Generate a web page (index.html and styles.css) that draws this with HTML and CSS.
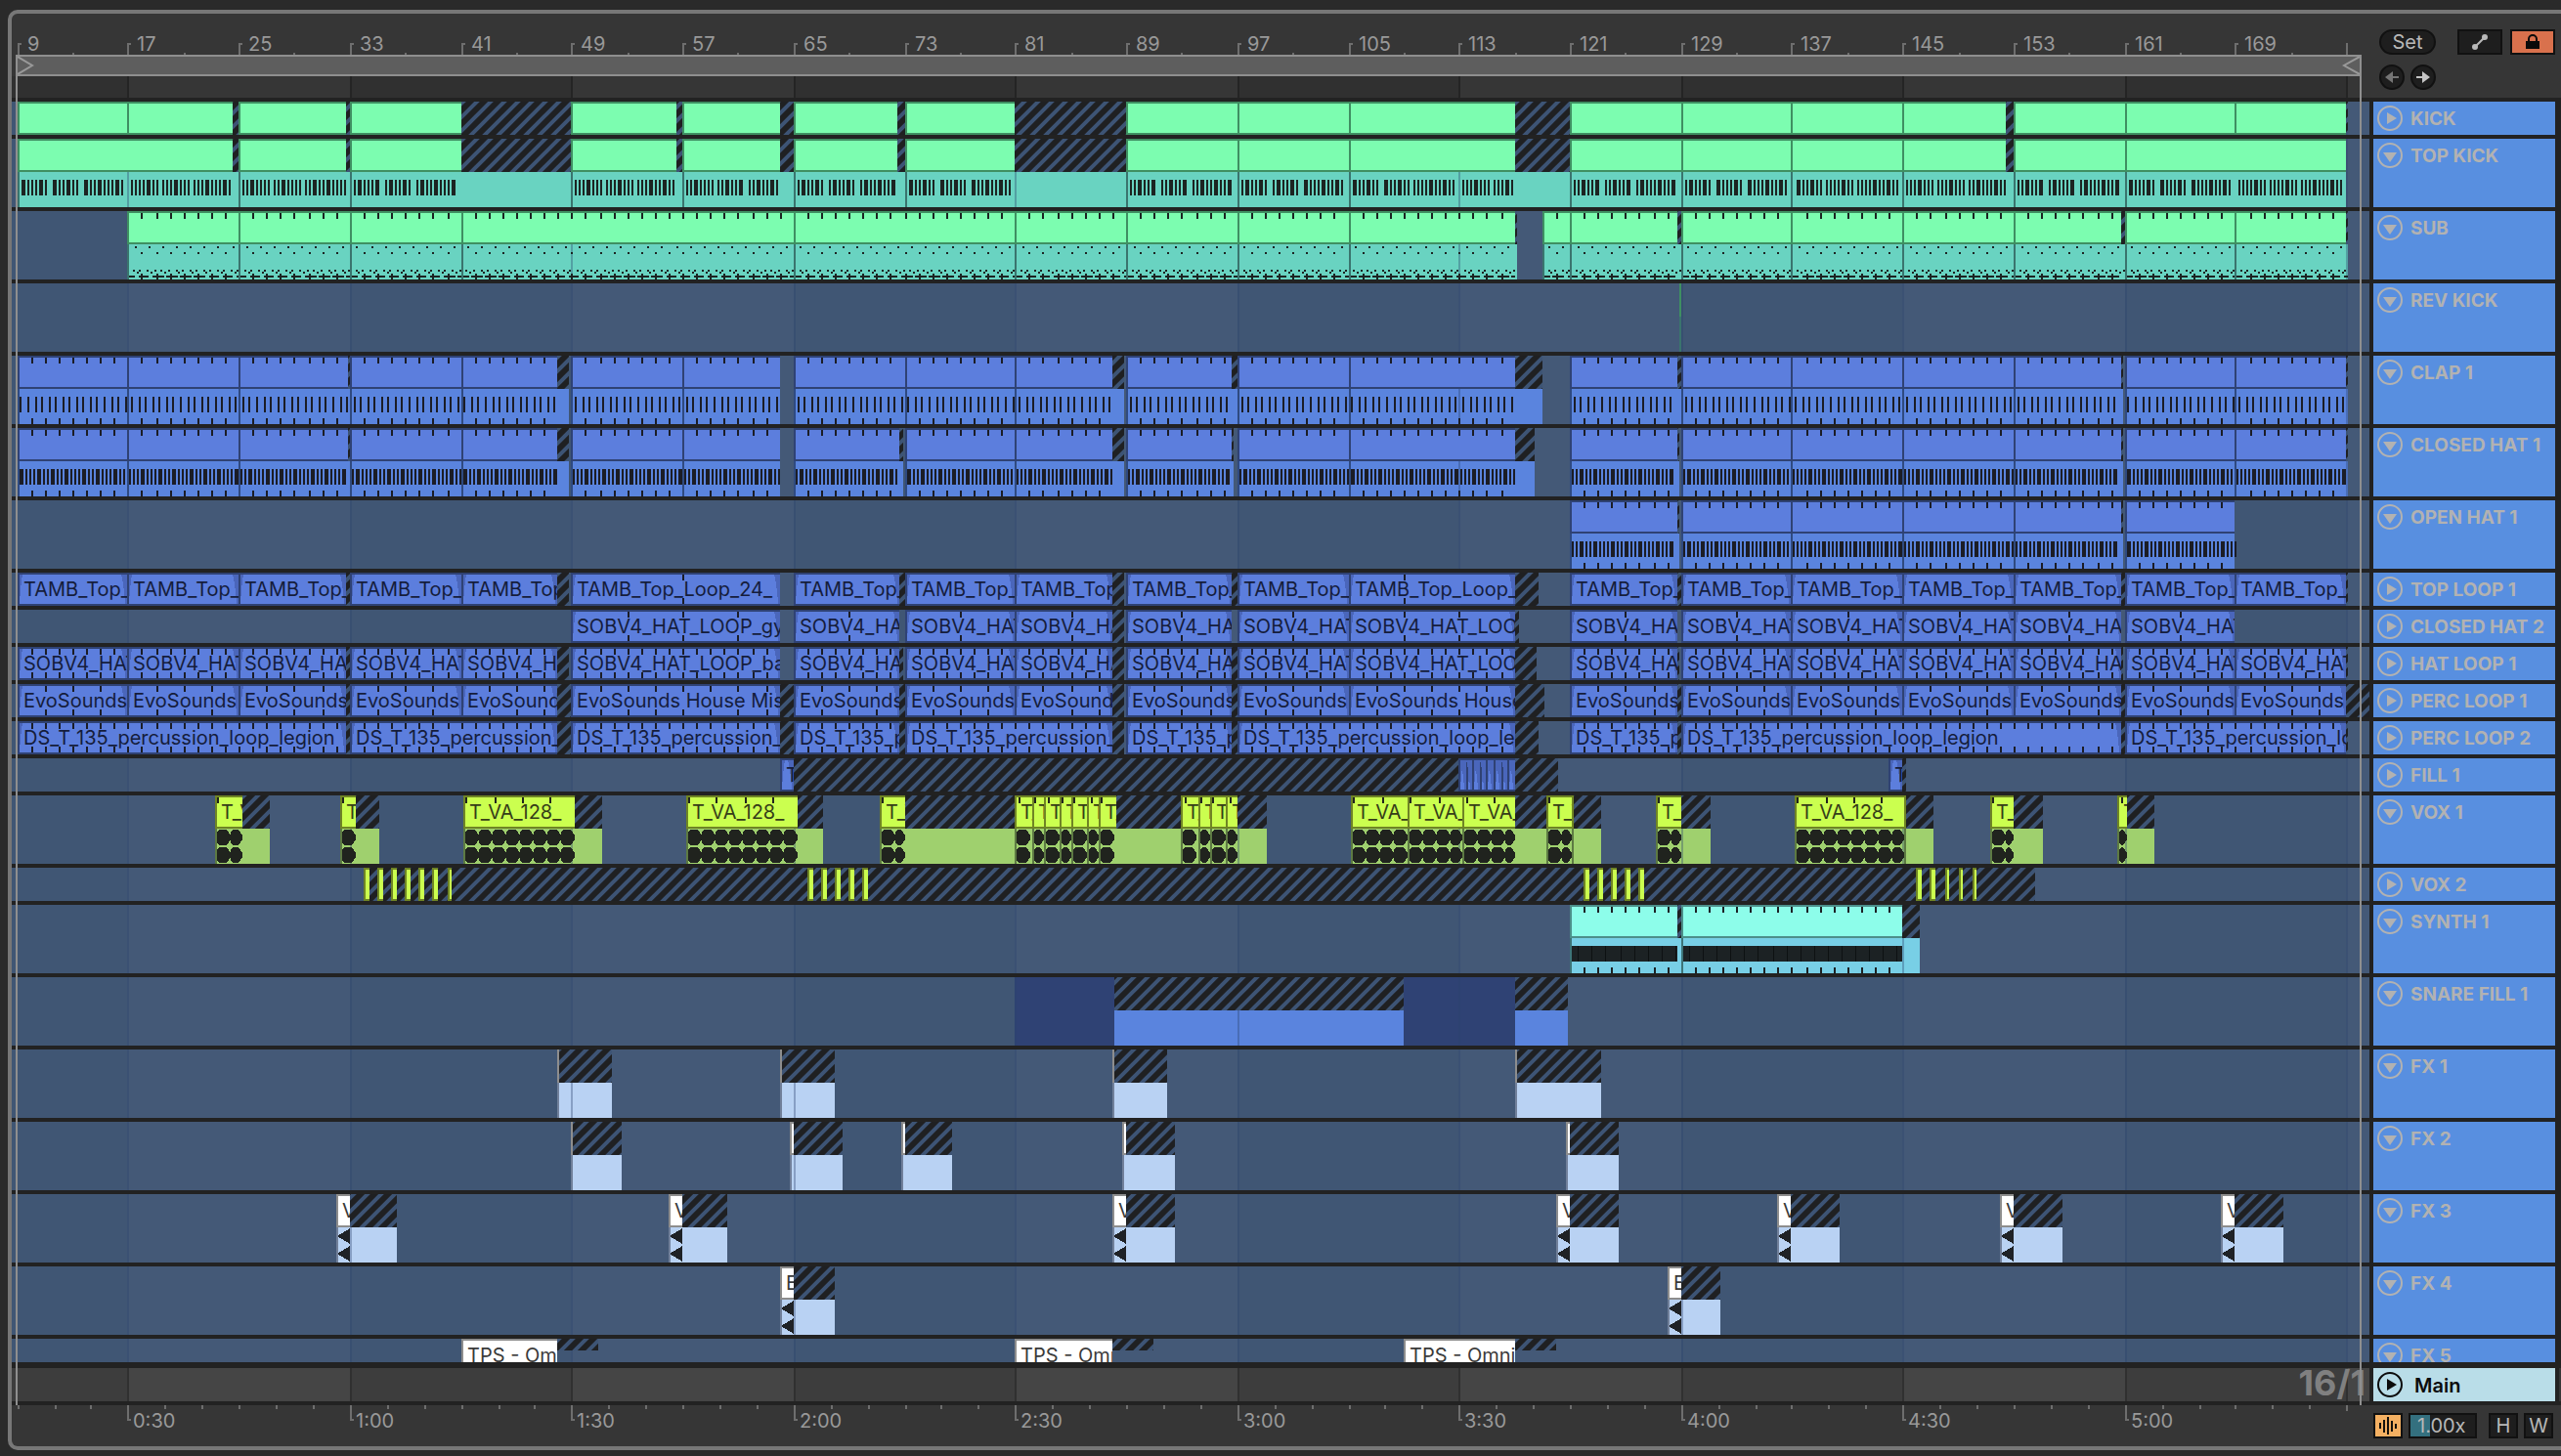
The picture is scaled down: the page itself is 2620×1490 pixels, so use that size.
FILE: index.html
```html
<!DOCTYPE html>
<html lang="en">
<head>
    <meta charset="UTF-8">
    <meta name="viewport" content="width=device-width, initial-scale=1.0">
    <title>Arrangement</title>
    <link rel="stylesheet" href="styles.css">
</head>
<body>
    <!-- Shared stripe pattern for empty take regions -->
    <svg class="defs" width="0" height="0" aria-hidden="true">
        <defs>
            <pattern id="hatch" width="14" height="14" patternUnits="userSpaceOnUse">
                <rect width="14" height="14" fill="#1f2022"/>
                <path d="M-4 4L4 -4M-4 18L18 -4M10 18L18 10" stroke="#3d5475" stroke-width="4"/>
            </pattern>
        </defs>
    </svg>

    <main class="arrangement">
        <div class="row top">
            <div class="time">
                <div class="beat-ruler" id="beatRuler"></div>
                <div class="loop">
                    <svg width="18" height="18" viewBox="0 0 18 18"><path d="M0 0L15 9L0 18" /></svg>
                    <svg width="18" height="18" viewBox="0 0 18 18"><path d="M18 0L2 9L18 18" /></svg>
                </div>
                <div class="scrub" id="scrub"></div>
            </div>
            <div class="controls">
                <div class="control-line">
                    <button class="pill">Set</button>
                    <button class="square" aria-label="Automation mode">
                        <svg width="18" height="18" viewBox="0 0 18 18">
                            <path d="M4 14L14 4" stroke="#b8b8b8" stroke-width="2"/>
                            <circle cx="4" cy="14" r="3" fill="#b8b8b8"/>
                            <circle cx="14" cy="4" r="3" fill="#b8b8b8"/>
                        </svg>
                    </button>
                    <button class="square lock" aria-label="Lock envelopes">
                        <svg width="16" height="16" viewBox="0 0 16 16">
                            <path d="M1 7H15V15H1Z" fill="#0a0a0a"/>
                            <path d="M4 8V5A4 4 0 0 1 12 5V8" fill="none" stroke="#0a0a0a" stroke-width="2"/>
                        </svg>
                    </button>
                </div>
                <div class="control-line arrows">
                    <button class="round dim" aria-label="Previous locator">
                        <svg width="16" height="14" viewBox="0 0 16 14"><path d="M1 7L9 1V6H15V8H9V13Z"/></svg>
                    </button>
                    <button class="round" aria-label="Next locator">
                        <svg width="16" height="14" viewBox="0 0 16 14"><path d="M15 7L7 1V6H1V8H7V13Z"/></svg>
                    </button>
                </div>
            </div>
        </div>

        <div class="tracks" id="tracks"></div>

        <div class="row main-row">
            <div class="lane" id="mainLane"></div>
            <div class="header">
                <button class="fold" aria-label="Unfold Main">
                    <svg width="26" height="26" viewBox="0 0 26 26"><circle cx="13" cy="13" r="12"/><path d="M10 7L20 13L10 19Z"/></svg>
                </button>
                <span class="name">Main</span>
            </div>
        </div>

        <div class="row bottom">
            <div class="time" id="clock"></div>
            <div class="view-controls">
                <button class="square wave" aria-label="Audio engine">
                    <svg width="20" height="20" viewBox="0 0 20 20">
                        <path d="M2 7V13M6 4V17M10 1V19M14 5V16M18 8V13" stroke="#15120c" stroke-width="2"/>
                    </svg>
                </button>
                <input class="zoom" type="text" value="1.00x" aria-label="Zoom">
                <button class="square">H</button>
                <button class="square">W</button>
            </div>
        </div>

        <div class="loop-edges"></div>
    </main>

    <script>
        const BARS_SHOWN = 170.04;
        const FIRST_BAR = 9;
        const LEAD_IN = 6;

        // clip: [start, end, tail end, label], all in bars
        const tracks = [
            { name: 'KICK', folded: true, color: 'green', clips: [
                [9, 17], [17, 24.5, 25], [25, 32.75, 33], [33, 41, 49], [49, 56.5, 57], [57, 64, 65], [65, 72.5, 73],
                [73, 81, 89], [89, 97], [97, 105], [105, 117, 121], [121, 129], [129, 137], [137, 145],
                [145, 152.5, 153], [153, 161], [161, 169], [169, 177, 177.1]] },
            { name: 'TOP KICK', color: 'green', notes: 'kick', clips: [
                [9, 24.5, 25], [25, 32.75, 33], [33, 41, 49], [49, 56.5, 57], [57, 64, 65], [65, 72.5, 73],
                [73, 81, 89], [89, 97], [97, 105], [105, 117, 121], [121, 129], [129, 137], [137, 145],
                [145, 152.5, 153], [153, 161], [161, 177]] },
            { name: 'SUB', color: 'green', notes: 'sub', tick: 1, clips: [
                [17, 25], [25, 33], [33, 41], [41, 65], [65, 81], [81, 89], [89, 97], [97, 105], [105, 117, 117.2],
                [119, 121], [121, 128.8, 129], [129, 137], [137, 145], [145, 153], [153, 160.7, 161],
                [161, 169], [169, 177, 177.1]] },
            { name: 'REV KICK', color: 'green', clips: [[128.85, 128.85, 129.1]] },
            { name: 'CLAP 1', color: 'blue', notes: 'clap', tick: 1, clips: [
                [9, 17], [17, 25], [25, 32.85, 33], [33, 41], [41, 48, 48.75], [49, 57], [57, 64, 64.1], [65, 73],
                [73, 81], [81, 88, 88.9], [89, 96.65, 97], [97, 105], [105, 117, 119], [121, 128.7, 129],
                [129, 137], [137, 145], [145, 153], [153, 160.7, 160.9], [161, 169], [169, 177, 177.1]] },
            { name: 'CLOSED HAT 1', color: 'blue', notes: 'hat', tick: 1, clips: [
                [9, 17], [17, 25], [25, 32.85, 33], [33, 41], [41, 48, 48.75], [49, 57], [57, 64, 64.1],
                [65, 72.7, 72.85], [73, 81], [81, 88, 88.9], [89, 96.65, 96.8], [97, 105], [105, 117, 118.4],
                [121, 128.7, 128.85], [129, 137], [137, 145], [145, 153], [153, 160.7, 160.85], [161, 169],
                [169, 177, 177.1]] },
            { name: 'OPEN HAT 1', color: 'blue', notes: 'hat', tick: 1, clips: [
                [121, 128.7, 128.85], [129, 137], [137, 145], [145, 153], [153, 160.7, 160.85], [161, 169]] },
            { name: 'TOP LOOP 1', folded: true, color: 'blue', label: 'TAMB_Top_Loop_24_', tick: 'long', clips: [
                [9, 17], [17, 25], [25, 32.8, 33], [33, 41], [41, 48, 48.75], [49, 64, 64.1], [65, 72.7, 73],
                [73, 81], [81, 88, 88.9], [89, 96.65, 97], [97, 105], [105, 117, 118.8], [121, 128.7, 129],
                [129, 137], [137, 145], [145, 153], [153, 160.7, 161], [161, 169], [169, 177, 177.1]] },
            { name: 'CLOSED HAT 2', folded: true, color: 'blue', label: 'SOBV4_HAT_LOOP_gyro', tick: 4, clips: [
                [49, 64, 64.1], [65, 72.7], [73, 81], [81, 88, 88.9], [89, 96.65], [97, 105],
                [105, 117, 117.3], [121, 128.7], [129, 137], [137, 145], [145, 153], [153, 160.7], [161, 169]] },
            { name: 'HAT LOOP 1', folded: true, color: 'blue', label: 'SOBV4_HAT_LOOP_bar', tick: 1, clips: [
                [9, 17], [17, 25], [25, 32.8, 33], [33, 41], [41, 48, 48.75], [49, 64, 64.1], [65, 72.7, 72.85],
                [73, 81], [81, 88, 88.9], [89, 96.65, 97], [97, 105], [105, 117, 118.6], [121, 128.7, 128.85],
                [129, 137], [137, 145], [145, 153], [153, 160.7, 160.9], [161, 169], [169, 177, 177.1]] },
            { name: 'PERC LOOP 1', folded: true, color: 'blue', label: 'EvoSounds House Mist', tick: 2, clips: [
                [9, 17], [17, 25], [25, 32.8, 33], [33, 41], [41, 48, 49], [49, 64, 65], [65, 72.7, 73],
                [73, 81], [81, 88, 88.9], [89, 96.65, 97], [97, 105], [105, 117, 119.1], [121, 128.7, 129],
                [129, 137], [137, 145], [145, 153], [153, 160.7, 161], [161, 169], [169, 177, 180]] },
            { name: 'PERC LOOP 2', folded: true, color: 'blue', label: 'DS_T_135_percussion_loop_legion', tick: 1, clips: [
                [9, 32.8, 33], [33, 48, 49], [49, 64, 65], [65, 72.7, 73], [73, 88, 88.9], [89, 96.65, 97],
                [97, 117, 118.8], [121, 128.7, 129], [129, 160.7, 161], [161, 177, 177.1]] },
            { name: 'FILL 1', folded: true, color: 'blue', clips: [
                [64, 65, 113, 'T'], [113, 113.5], [113.5, 114], [114, 114.5], [114.5, 115], [115, 115.5],
                [115.5, 116], [116, 116.5], [116.5, 117, 120.2], [144, 145, 145.2, 'T']] },
            { name: 'VOX 1', color: 'lime', notes: 'wave', label: 'T_VA_128_', tick: 'vox', clips: [
                [23.3, 25.2, 27.2], [32.3, 33.4, 35.2], [41.2, 49.2, 51.2], [57.25, 65.25, 67.2],
                [71.2, 73, 81], [81, 82.2], [82.2, 83.1], [83.1, 84.2], [84.2, 85], [85, 86.2], [86.2, 87],
                [87, 88.3, 93], [93, 94.2], [94.2, 95], [95, 96.2], [96.2, 97, 99.1],
                [105.2, 109.3], [109.3, 113.3], [113.3, 117.1, 119.3], [119.3, 121.1], [121.1, 121.3, 123.2],
                [127.2, 129, 131.1], [137.2, 145.1], [145.1, 145.3, 147.2], [151.3, 153, 155.1],
                [160.5, 161.2, 163.1]] },
            { name: 'VOX 2', folded: true, color: 'lime', clips: [
                [34, 34.4, 35], [35, 35.4, 36], [36, 36.4, 37], [37, 37.4, 38], [38, 38.4, 39], [39, 39.4, 40],
                [40, 40.3, 66], [66, 66.4, 67], [67, 67.4, 68], [68, 68.4, 69], [69, 69.4, 70], [70, 70.4, 122],
                [122, 122.4, 123], [123, 123.4, 124], [124, 124.4, 125], [125, 125.4, 126], [126, 126.4, 146],
                [146, 146.4, 147], [147, 147.4, 148], [148, 148.4, 149], [149, 149.3, 150], [150, 150.3, 154.5]] },
            { name: 'SYNTH 1', color: 'cyan', notes: 'chord', tick: 1, clips: [[121, 128.8, 129], [129, 145, 146.2]] },
            { name: 'SNARE FILL 1', color: 'snare', blocks: [[81, 88.1], [109, 117]], clips: [
                [88.1, 88.1, 109], [117, 117, 120.8]] },
            { name: 'FX 1', color: 'white', clips: [
                [48, 48, 51.9], [64, 64, 68], [88, 88, 91.9], [117, 117, 123.2]] },
            { name: 'FX 2', color: 'white', clips: [
                [49, 49, 52.6], [64.75, 65, 68.5], [72.75, 73, 76.4], [88.75, 89, 92.5], [120.75, 121, 124.5]] },
            { name: 'FX 3', color: 'white', notes: 'swell', label: 'V', clips: [
                [32, 33, 36.4], [56, 57, 60.3], [88, 89, 92.5], [120, 121, 124.5], [136, 137, 140.4],
                [152, 153, 156.5], [168, 169, 172.4]] },
            { name: 'FX 4', color: 'white', notes: 'swell', label: 'E', clips: [[64, 65, 68], [128, 129, 131.8]] },
            { name: 'FX 5', color: 'white', label: 'TPS - Omnia', shortTail: true, clips: [
                [41, 48, 50.9], [81, 88, 90.9], [109, 117, 120]] }
        ];

        const palette = {
            green: { fill: '#7cfdb0', edge: '#3f8f62', body: '#69d3c1', bodyEdge: '#3a746e', note: '#1c2422' },
            blue: { fill: '#5c7edd', edge: '#2f4274', body: '#5a84de', bodyEdge: '#2f4a80', note: '#1b1d26' },
            lime: { fill: '#cbff4f', edge: '#6f8425', body: '#9fd06e', bodyEdge: '#5d7a43', note: '#20231e' },
            cyan: { fill: '#8dfdea', edge: '#4c8f8a', body: '#78cfe6', bodyEdge: '#3d7478', note: '#1c2224' },
            snare: { fill: '#5c7edd', edge: '#2f4274', body: '#5a84de', bodyEdge: '#5a84de', note: '#1b1d26' },
            white: { fill: '#ffffff', edge: '#8d8d8d', body: '#b9d2f3', bodyEdge: '#71809a', note: '#1f2226' }
        };

        let barWidth = 0;

        // everything snaps to a two pixel raster
        function snap(v) {
            return 2 * Math.floor((v + 0.3) / 2);
        }

        function px(bar) {
            return snap(LEAD_IN + (bar - FIRST_BAR) * barWidth);
        }

        function rect(x, y, w, h, fill) {
            return w > 0 ? `<rect x="${x}" y="${y}" width="${w}" height="${h}" fill="${fill}"/>` : '';
        }

        function bands(h, fill) {
            let out = '';
            for (let bar = 17; bar < 180; bar += 32) {
                out += rect(px(bar), 0, px(bar + 16) - px(bar), h, fill);
            }
            return out;
        }

        function gridLines(h, fill) {
            let out = '';
            for (let bar = 17; bar < 180; bar += 16) {
                out += rect(px(bar), 0, 2, h, fill);
            }
            return out;
        }

        function svg(h, content) {
            return `<svg class="art" width="100%" height="${h}" shape-rendering="crispEdges" aria-hidden="true">${content}</svg>`;
        }

        function drawTicks(track, start, end, h, fill) {
            let out = '';
            let step = track.tick;
            let first = start + step;
            if (step === 'long') {
                step = end - start > 13 ? 8 : 4;
                first = end - start > 9 ? start + step : end;
                if (step === 4) end = Math.min(end, start + 5);
            }
            if (step === 'vox') {
                step = 2;
                first = start + 0.2;
            }
            for (let bar = first; bar < end - 0.1; bar += step) {
                out += rect(px(bar), 2, 2, 6, fill);
                if (track.tick !== 'vox') {
                    out += rect(px(bar), h - (track.folded ? 8 : 6), 2, 6, fill);
                }
            }
            return out;
        }

        function drawBlobs(start, end, fill) {
            let out = '';
            const right = px(end);
            for (let x = px(start) + 2; x < right - 2; x += 14) {
                const w = Math.min(14, right - x);
                const slope = Math.min(4, w - 2);
                const flat = Math.max(w - 2 - slope, 0);
                [43, 61].forEach(cy => {
                    out += `<path d="M${x} ${cy - 6}l2 -2h${flat}l${slope} 6v4l-${slope} 6h-${flat}l-2 -2z" fill="${fill}"/>`;
                });
            }
            return out;
        }

        function drawNotes(kind, start, end, c) {
            let out = '';
            const left = LEAD_IN + (start - FIRST_BAR) * barWidth;
            const right = px(end);
            const beats = Math.floor((end - start) * 4);
            if (kind === 'kick') {
                for (let n = 1; n < beats; n++) {
                    if ([0, 9, 18, 31].includes(n % 32)) continue;
                    out += rect(snap(left + n * barWidth / 4 + 0.5), 42, 2, 16, c.note);
                }
            }
            if (kind === 'clap') {
                for (let n = 0; n < beats / 2; n++) {
                    out += rect(snap(left + (n + 0.5) * barWidth / 2), 42, 2, 16, c.note);
                }
            }
            if (kind === 'hat') {
                for (let n = 0; n < beats; n++) {
                    out += rect(snap(left + n * barWidth / 4 + 2), 42, 2, 16, c.note);
                }
            }
            if (kind === 'sub') {
                for (let bar = start; bar < end; bar++) {
                    out += rect(px(bar + 0.5), 36, 2, 2, c.note);
                    out += rect(px(bar + 0.4), 60, 2, 2, c.note);
                    out += rect(px(bar + 0.85), 60, 2, 2, c.note);
                    out += rect(px(bar + 0.65), 62, 2, 2, c.note);
                    out += rect(px(bar) + 2, 66, 6, 2, c.note);
                    if (bar + 0.9 < end) {
                        out += rect(px(bar + 0.8), 66, 4, 2, c.note);
                    }
                    if (bar > start) {
                        out += rect(px(bar), 42, 2, 2, c.note);
                        out += rect(px(bar), 64, 2, 6, c.note);
                    }
                }
            }
            if (kind === 'chord') {
                out += rect(px(start) + 2, 42, right - px(start) - 2, 16, c.note);
                for (let bar = start + 0.6; bar < end; bar++) {
                    out += rect(px(bar), 42, 1, 16, '#0d1112');
                }
            }
            if (kind === 'wave') {
                out += drawBlobs(start, end, c.note);
            }
            if (kind === 'swell') {
                const x = px(start) + 2;
                [43, 61].forEach(cy => {
                    out += `<path d="M${x} ${cy - 1}l4 -2L${right} ${cy - 8}V${cy + 8}L${x + 4} ${cy + 3}l-4 -2z" fill="${c.note}"/>`;
                });
            }
            return out;
        }

        function drawLane(track) {
            const c = palette[track.color];
            const h = track.folded ? 34 : 70;
            let bodies = '';
            let heads = '';
            let details = '';
            let names = '';

            (track.blocks || []).forEach(([from, to]) => {
                bodies += rect(px(from), 0, px(to) - px(from), h, '#2f4274');
            });

            track.clips.forEach(([start, end, tail, text]) => {
                const x = px(start);
                const right = px(end);
                const stop = px(tail || end);
                if (!track.folded && !track.shortTail) {
                    bodies += rect(x, 34, stop - x, 36, c.body);
                    details += rect(x, 34, 2, 36, c.bodyEdge);
                }
                heads += rect(right, 0, stop - right, track.shortTail ? 12 : 34, 'url(#hatch)');
                if (end > start) {
                    heads += rect(x, 0, right - x, 34, c.edge);
                    heads += rect(x + 2, 2, right - x - 2, 30, c.fill);
                } else if (track.color !== 'snare') {
                    heads += rect(x, 0, 2, 34, c.edge);
                }
                if (track.folded && track.color === 'blue') {
                    details += `<path d="M${right - 6} 2H${right}V32H${right - 2}Q${right - 3} 14 ${right - 6} 2Z" fill="#4a66bb"/>`;
                    details += `<path d="M${x + 2} 2H${x + 5}Q${x + 3} 14 ${x + 2} 32Z" fill="#4a66bb"/>`;
                }
                if (end > start) {
                    details += drawNotes(track.notes, start, end, c);
                    if (track.tick) details += drawTicks(track, start, end, h, c.note);
                }
                const label = text || track.label;
                if (label && right - x > 8) {
                    names += `<span class="clip-name" style="left:${x}px;width:${right - x}px">${label}</span>`;
                }
            });

            return svg(h, bands(h, '#445977') + bodies + gridLines(h, 'rgba(42,66,110,0.35)') + heads + details) + names;
        }

        function foldIcon(folded) {
            const arrow = folded ? 'M10 7L20 13L10 19Z' : 'M6 10H20L13 20Z';
            return `<svg width="26" height="26" viewBox="0 0 26 26"><circle cx="13" cy="13" r="12"/><path d="${arrow}"/></svg>`;
        }

        function buildTracks() {
            document.getElementById('tracks').innerHTML = tracks.map(t => `
                <div class="row track ${t.folded ? 'folded' : ''} ${t.color}">
                    <div class="lane"></div>
                    <div class="header">
                        <button class="fold" aria-label="Fold ${t.name}">${foldIcon(t.folded)}</button>
                        <span class="name">${t.name}</span>
                    </div>
                </div>`).join('');
        }

        function draw() {
            const lanes = document.querySelectorAll('.track .lane');
            barWidth = lanes[0].clientWidth / BARS_SHOWN;
            lanes.forEach((lane, i) => {
                lane.innerHTML = drawLane(tracks[i]);
            });

            // Beat ruler
            let marks = '';
            let labels = '';
            for (let bar = 9; bar <= 177; bar += 8) {
                marks += rect(px(bar), 30, 2, 12, '#6e6e6e');
                if (bar < 177) {
                    marks += rect(px(bar), 30, 4, 2, '#6e6e6e');
                    marks += rect(px(bar + 4), 40, 2, 2, '#6e6e6e');
                    labels += `<span class="mark" style="left:${px(bar)}px">${bar}</span>`;
                }
            }
            document.getElementById('beatRuler').innerHTML = svg(42, marks) + labels;
            document.getElementById('scrub').innerHTML = svg(22, bands(22, '#363636') + gridLines(22, '#242424'));
            document.getElementById('mainLane').innerHTML =
                svg(34, bands(34, '#454545') + gridLines(34, '#303030')) + '<span class="grid-size">16/1</span>';

            // Clock ruler, one tick every five seconds
            marks = '';
            labels = '';
            for (let s = 0; s <= 63; s++) {
                const x = px(9 + s * 8 / 3);
                const major = s % 6 === 3 && s < 63;
                marks += rect(x, 0, 2, major ? 16 : (s === 63 ? 6 : 4), '#6e6e6e');
                if (major) {
                    const total = (s + 3) * 5;
                    marks += rect(x, 14, 4, 2, '#6e6e6e');
                    labels += `<span class="mark" style="left:${x}px">${Math.floor(total / 60)}:${String(total % 60).padStart(2, '0')}</span>`;
                }
            }
            document.getElementById('clock').innerHTML = svg(42, marks) + labels;
        }

        buildTracks();
        draw();
        window.addEventListener('resize', draw);
    </script>
</body>
</html>
```
FILE: styles.css
```css
* {
    box-sizing: border-box;
}
body {
    margin: 0;
    height: 100vh;
    display: flex;
    flex-direction: column;
    overflow: hidden;
    background: #2a2a2a;
    color: #999;
    font-family: Inter, "Liberation Sans", sans-serif;
    font-size: 20px;
}
button, input {
    font: inherit;
    padding: 0;
}
.defs {
    position: absolute;
}
.arrangement {
    position: relative;
    flex: 1;
    min-height: 0;
    margin: 10px 0 6px 8px;
    display: flex;
    flex-direction: column;
    background: #363636;
    border: 4px solid #777;
    border-right: none;
    border-radius: 10px 0 0 10px;
}
.row {
    display: flex;
    flex: none;
}
.art {
    display: block;
}

/* Rulers */
.top {
    border-bottom: 4px solid #222;
}
.time {
    flex: 1;
    min-width: 0;
    position: relative;
}
.beat-ruler {
    position: relative;
    height: 42px;
}
.mark {
    position: absolute;
    line-height: 20px;
    white-space: nowrap;
}
.beat-ruler .mark {
    top: 21px;
    padding-left: 10px;
}
.bottom .mark {
    top: 6px;
    padding-left: 6px;
}
.loop {
    display: flex;
    justify-content: space-between;
    height: 22px;
    margin: 0 8px 0 4px;
    background: #5e5e5e;
    border: 2px solid #8f8f8f;
}
.loop path {
    fill: none;
    stroke: #999;
    stroke-width: 2;
}
.scrub {
    height: 22px;
    background: #303030;
}
.loop-edges {
    position: absolute;
    top: 42px;
    bottom: 42px;
    left: 4px;
    right: 204px;
    border: solid #8f8f8f;
    border-width: 0 2px;
    pointer-events: none;
}

/* Controls at the top right */
.controls {
    width: 196px;
    padding: 16px 6px 0 10px;
}
.control-line {
    display: flex;
    gap: 8px;
}
.arrows {
    gap: 6px;
    margin-top: 10px;
}
.pill, .round, .square, .zoom {
    height: 26px;
    display: flex;
    align-items: center;
    justify-content: center;
    background: #1e1e1e;
    border: 2px solid #111;
    color: #b8b8b8;
}
.pill {
    width: 58px;
    margin-right: auto;
    border-radius: 13px;
}
.round {
    width: 26px;
    border-radius: 50%;
    fill: #c4c4c4;
}
.round svg {
    flex: none;
}
.dim {
    fill: #757575;
}
.square {
    width: 46px;
}
.lock {
    background: #d9714d;
}

/* Tracks */
.tracks {
    flex: 1;
    min-height: 0;
    overflow: hidden;
    background: #222;
}
.track {
    height: 74px;
    border-bottom: 4px solid #222;
}
.track.folded {
    height: 38px;
}
.lane {
    flex: 1;
    min-width: 0;
    position: relative;
    overflow: hidden;
    background: #405674;
}
.header {
    display: flex;
    align-items: flex-start;
    gap: 8px;
    width: 194px;
    margin-right: 2px;
    padding: 4px;
    border: solid #222;
    border-width: 0 4px;
    background: #588fe0;
    color: #b2b2b2;
}
.fold {
    width: 26px;
    height: 26px;
    border: none;
    background: none;
    color: inherit;
}
.fold svg {
    display: block;
}
.fold circle {
    fill: none;
    stroke: currentColor;
    stroke-width: 2;
}
.fold path {
    fill: currentColor;
}
.name {
    line-height: 28px;
    font-size: 19px;
    font-weight: 700;
    white-space: nowrap;
}
.clip-name {
    position: absolute;
    top: 0;
    height: 34px;
    padding-left: 6px;
    line-height: 34px;
    color: #151d3c;
    overflow: hidden;
    white-space: nowrap;
}
.lime .clip-name {
    color: #353d18;
}
.white .clip-name {
    color: #3a3a3a;
}

/* Main track */
.main-row {
    height: 44px;
    border: solid #222;
    border-width: 6px 0 4px;
}
.main-row .lane {
    background: #3d3d3d;
}
.main-row .header {
    background: #b9dde8;
    color: #0c0c0c;
    gap: 12px;
}
.main-row .name {
    font-size: 20px;
    font-weight: 600;
}
.grid-size {
    position: absolute;
    top: 0;
    right: 4px;
    line-height: 30px;
    font-size: 36px;
    font-weight: 700;
    color: #808080;
}

/* Bottom strip */
.bottom {
    height: 42px;
}
.view-controls {
    display: flex;
    gap: 6px;
    width: 196px;
    padding: 8px 8px 0 4px;
}
.view-controls .square {
    width: 30px;
}
.view-controls .wave {
    background: #f4b062;
}
.zoom {
    width: 70px;
    margin-right: 6px;
    padding-left: 7px;
    background: linear-gradient(to right, #34707f 20px, #1e1e1e 20px);
}
```
